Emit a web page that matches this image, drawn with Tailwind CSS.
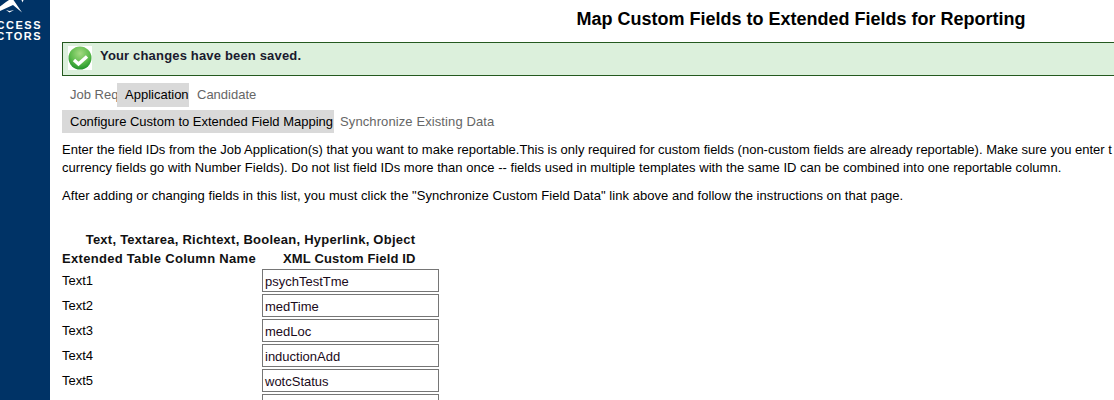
<!DOCTYPE html>
<html lang="en">
<head>
<meta charset="UTF-8">
<title>Map Custom Fields</title>
<script src="https://cdn.jsdelivr.net/npm/@tailwindcss/browser@4"></script>
</head>
<body class="bg-white h-[400px] w-[1114px] overflow-hidden flex text-[13px] leading-[15px] text-black font-['Liberation_Sans',Arial,sans-serif]">
  <!-- left rail with cropped logo -->
  <aside class="w-[50px] shrink-0 h-full bg-[#003366] overflow-hidden relative">
    <svg class="absolute left-0 top-0" width="50" height="16" viewBox="0 0 50 16" fill="#fff">
      <path d="M0 6.5 L6 2 L9 0 H13.5 L22 12.5 L13 5 L0 11 Z"/>
      <path d="M6 10 L9.5 12.5 L14 10 L9.5 11 Z"/>
      <path d="M21.5 0 H23.5 L22.5 2.5 Z"/>
    </svg>
    <div class="absolute top-[20px] right-[8px] text-white font-bold text-[11px] leading-[11px] tracking-[1.5px] text-right whitespace-nowrap">CCESS<br>CTORS</div>
  </aside>

  <main class="w-[1490px] shrink-0 pl-[12px] relative">
    <h1 class="text-[18px] leading-[21px] font-bold text-center pt-[9px] whitespace-nowrap">Map Custom Fields to Extended Fields for Reporting</h1>

    <div class="mt-[12px] h-[34px] border border-[#24591f] bg-[#dcf0dc] flex items-start pl-[5px] pt-[3px]">
      <svg width="24" height="24" viewBox="0 0 24 24" class="shrink-0 bg-white">
        <defs>
          <radialGradient id="ok" cx="0.5" cy="0.3" r="0.7">
            <stop offset="0" stop-color="#a4da82"/>
            <stop offset="0.6" stop-color="#5dbb4c"/>
            <stop offset="1" stop-color="#21932b"/>
          </radialGradient>
        </defs>
        <circle cx="12" cy="12" r="11.5" fill="url(#ok)"/>
        <path d="M6 14 L10.5 18 L19 10.5" fill="none" stroke="#fff" stroke-width="3.4"/>
      </svg>
      <span class="font-bold ml-[8px] mt-[2px] tracking-[0.17px] text-[#1a1a2e]">Your changes have been saved.</span>
    </div>

    <nav class="flex mt-[7px] h-[24px] text-[#666666] items-stretch">
      <a class="pl-[8px] pt-[4px] w-[55px] whitespace-nowrap">Job Req</a>
      <a class="pl-[8px] pt-[4px] bg-[#d9d9d9] text-black w-[72px]">Application</a>
      <a class="px-[8px] pt-[4px]">Candidate</a>
    </nav>
    <nav class="flex mt-[3px] h-[23px] text-[#666666] items-stretch">
      <a class="pl-[8px] pr-[1px] pt-[4px] bg-[#d9d9d9] text-black">Configure Custom to Extended Field Mapping</a>
      <a class="px-[6px] pt-[4px] tracking-[0.1px]">Synchronize Existing Data</a>
    </nav>

    <p class="mt-[8px] whitespace-nowrap leading-[18px] tracking-[0px]">Enter the field IDs from the Job Application(s) that you want to make reportable.This is only required for custom fields (non-custom fields are already reportable). Make sure you enter t</p>
    <p class="whitespace-nowrap leading-[18px] tracking-[0.025px]">currency fields go with Number Fields). Do not list field IDs more than once -- fields used in multiple templates with the same ID can be combined into one reportable column.</p>
    <p class="mt-[10px] whitespace-nowrap leading-[18px] tracking-[0.05px]">After adding or changing fields in this list, you must click the "Synchronize Custom Field Data" link above and follow the instructions on that page.</p>

    <div class="mt-[27px] w-[377px] font-bold text-[#111]">
      <div class="text-center leading-[15px] tracking-[0.25px]">Text, Textarea, Richtext, Boolean, Hyperlink, Object</div>
      <div class="flex mt-[4px] leading-[15px]">
        <div class="w-[200px] whitespace-nowrap tracking-[0.3px]">Extended Table Column Name</div>
        <div class="w-[177px] pl-[21px] whitespace-nowrap tracking-[0.15px]">XML Custom Field ID</div>
      </div>
    </div>
    <div class="flex flex-col gap-[2px] mt-[3px]">
      <div class="flex h-[23px]"><span class="w-[200px] pt-[4px]">Text1</span><div class="w-[177px] h-[23px] border border-[#767676] pl-[2px] pt-[4px] text-[#1a0a1a]">psychTestTme</div></div>
      <div class="flex h-[23px]"><span class="w-[200px] pt-[4px]">Text2</span><div class="w-[177px] h-[23px] border border-[#767676] pl-[2px] pt-[4px] text-[#1a0a1a]">medTime</div></div>
      <div class="flex h-[23px]"><span class="w-[200px] pt-[4px]">Text3</span><div class="w-[177px] h-[23px] border border-[#767676] pl-[2px] pt-[4px] text-[#1a0a1a]">medLoc</div></div>
      <div class="flex h-[23px]"><span class="w-[200px] pt-[4px]">Text4</span><div class="w-[177px] h-[23px] border border-[#767676] pl-[2px] pt-[4px] text-[#1a0a1a]">inductionAdd</div></div>
      <div class="flex h-[23px]"><span class="w-[200px] pt-[4px]">Text5</span><div class="w-[177px] h-[23px] border border-[#767676] pl-[2px] pt-[4px] text-[#1a0a1a]">wotcStatus</div></div>
      <div class="flex h-[23px]"><span class="w-[200px]"></span><div class="w-[177px] h-[23px] border border-[#767676]"></div></div>
    </div>
  </main>
</body>
</html>
